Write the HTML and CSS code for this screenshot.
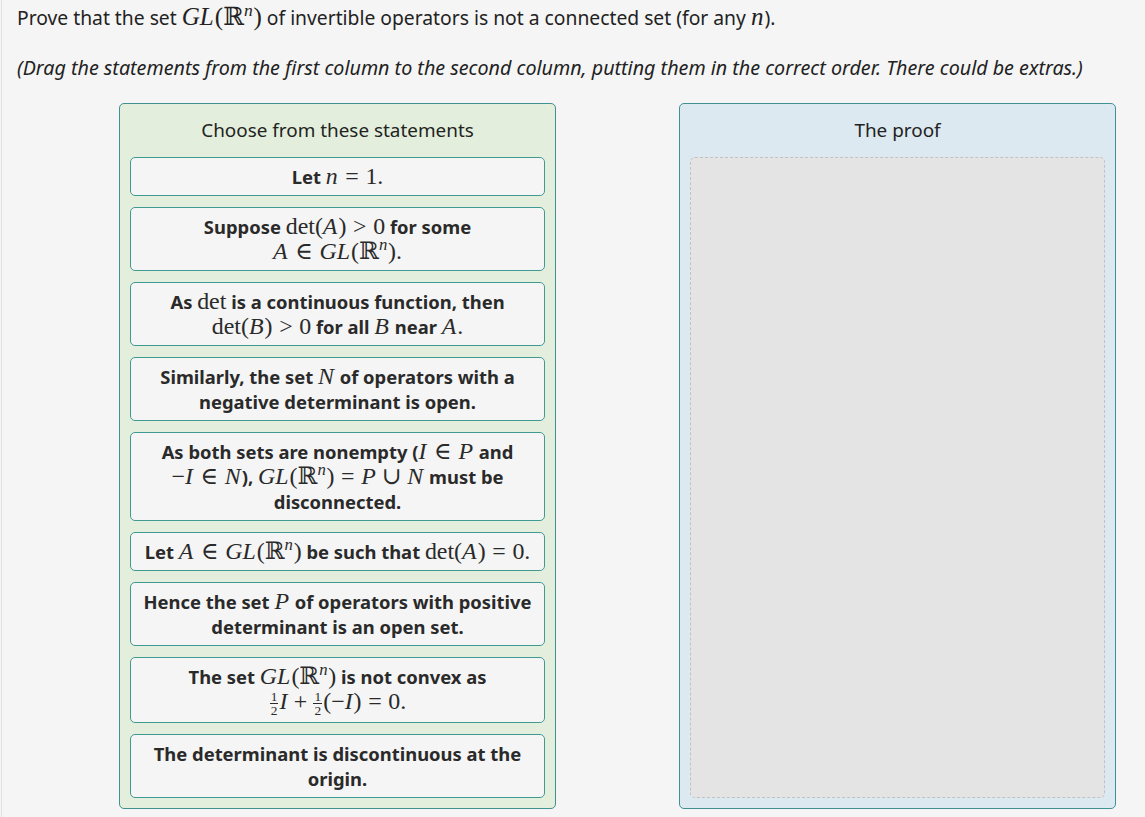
FILE: index.html
```html
<!DOCTYPE html>
<html lang="en">
<head>
    <meta charset="UTF-8">
    <title>Parsons proof: GL(Rn) is not connected</title>
    <link rel="stylesheet" href="styles.css">
</head>
<body>
<div class="page">
    <p class="prompt">Prove that the set <span class="m"><i>GL</i>(ℝ<sup><i>n</i></sup>)</span> of invertible operators is not a connected set (for any <span class="m"><i>n</i></span>).</p>
    <p class="hint">(Drag the statements from the first column to the second column, putting them in the correct order. There could be extras.)</p>

    <div class="columns">
        <div class="col choose">
            <div class="col-head">Choose from these statements</div>
            <ul class="items">
                <li>Let <span class="m"><i>n</i><span class="r">=</span>1.</span></li>
                <li>Suppose <span class="m">det(<i>A</i>)<span class="r">&gt;</span>0</span> for some <span class="m"><i>A</i><span class="r">∈</span><i>GL</i>(ℝ<sup><i>n</i></sup>).</span></li>
                <li>As <span class="m">det</span> is a continuous function, then <span class="m">det(<i>B</i>)<span class="r">&gt;</span>0</span> for all <span class="m"><i>B</i></span> near <span class="m"><i>A</i>.</span></li>
                <li>Similarly, the set <span class="m"><i>N</i></span> of operators with a negative determinant is open.</li>
                <li>As both sets are nonempty (<span class="m"><i>I</i><span class="r">∈</span><i>P</i></span> and <span class="m">−<i>I</i><span class="r">∈</span><i>N</i></span>), <span class="m"><i>GL</i>(ℝ<sup><i>n</i></sup>)<span class="r">=</span><i>P</i><span class="b">∪</span><i>N</i></span> must be disconnected.</li>
                <li>Let <span class="m"><i>A</i><span class="r">∈</span><i>GL</i>(ℝ<sup><i>n</i></sup>)</span> be such that <span class="m">det(<i>A</i>)<span class="r">=</span>0.</span></li>
                <li>Hence the set <span class="m"><i>P</i></span> of operators with positive determinant is an open set.</li>
                <li>The set <span class="m"><i>GL</i>(ℝ<sup><i>n</i></sup>)</span> is not convex as <span class="m"><span class="frac"><span>1</span><span>2</span></span><i>I</i><span class="b">+</span><span class="frac"><span>1</span><span>2</span></span>(−<i>I</i>)<span class="r">=</span>0.</span></li>
                <li>The determinant is discontinuous at the origin.</li>
            </ul>
        </div>
        <div class="col proof">
            <div class="col-head">The proof</div>
            <div class="drop"></div>
        </div>
    </div>
</div>
</body>
</html>
```

FILE: styles.css
```css
body {
    margin: 0;
    background-color: #f5f5f5;
    color: #222;
    font-family: "Noto Sans", "Open Sans", sans-serif;
    font-size: 19px;
}
.page {
    margin-left: 1px;
    border-left: 1px solid #e2e2e2;
    padding: 6px 0 9px 15px;
    min-height: 802px;
}
.prompt {
    margin: 0;
    line-height: 24px;
    font-size: 19.3px;
}
.hint {
    margin: 26px 0 23px;
    line-height: 24px;
    font-style: italic;
    font-size: 19.7px;
}
.m {
    font-family: "Liberation Serif", "DejaVu Serif", serif;
    font-size: 1.3em;
    font-weight: normal;
    white-space: nowrap;
    line-height: 0;
}
.m i {
    padding-right: 0.04em;
}
.m sup {
    font-size: 0.7em;
    line-height: 0;
}
.r {
    padding: 0 0.2778em;
}
.b {
    padding: 0 0.2222em;
}
.columns {
    display: grid;
    grid-template-columns: 437px 437px;
    column-gap: 123px;
    margin-left: 102px;
}
.col {
    border: 1px solid #3f9193;
    border-radius: 5px;
    padding: 0 10px 10px;
}
.choose {
    background-color: #e3efdc;
}
.proof {
    background-color: #dce9f0;
    display: flex;
    flex-direction: column;
}
.col-head {
    text-align: center;
    line-height: 25px;
    padding: 14px 0 14px;
    font-size: 18.9px;
}
.items {
    list-style: none;
    margin: 0;
    padding: 0;
    display: flex;
    flex-direction: column;
    gap: 11px;
}
.items li {
    background-color: #f5f5f5;
    border: 1px solid #3f9a94;
    border-radius: 5px;
    padding: 6px 11px;
    line-height: 25px;
    text-align: center;
    font-weight: bold;
    font-size: 18.4px;
    color: #2a2a2a;
}
.drop {
    flex: 1;
    background-color: #e4e4e4;
    border: 1px dashed #c2c2c2;
    border-radius: 5px;
}
.frac {
    display: inline-flex;
    flex-direction: column;
    vertical-align: middle;
    font-size: 0.56em;
    line-height: 1;
    text-align: center;
    margin: -1px 1px;
}
.frac span:first-child {
    border-bottom: 1px solid #2a2a2a;
    padding: 0 1px;
}
```
